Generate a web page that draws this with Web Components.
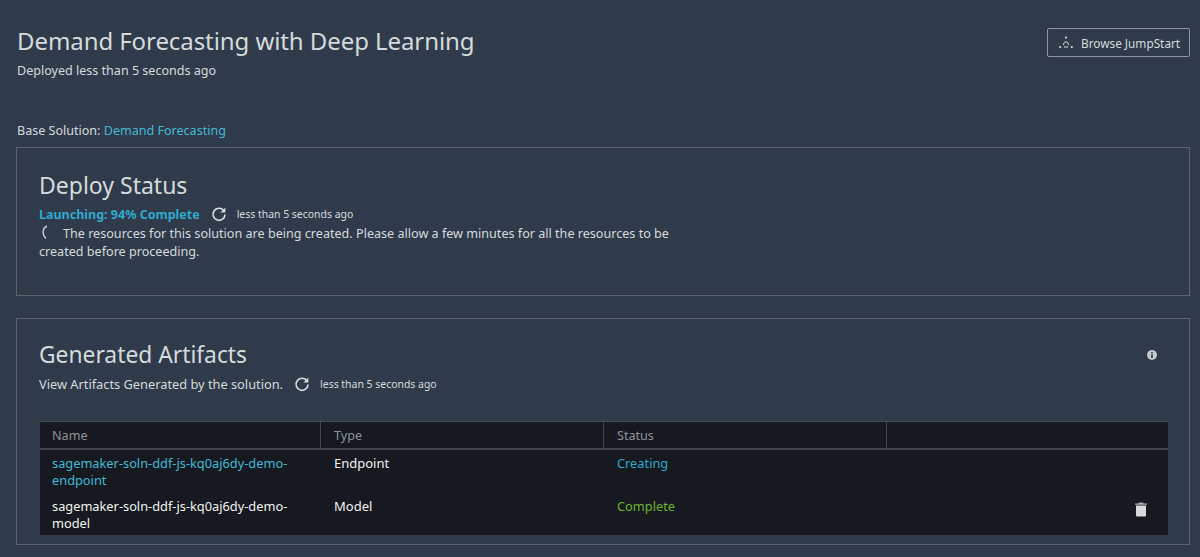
<!DOCTYPE html>
<html>
<head>
<meta charset="utf-8">
<title>Demand Forecasting with Deep Learning</title>
<style>
html, body { margin: 0; height: 100%; background: #2f3a4b; overflow: hidden; }
body { font-family: "Noto Sans", "Liberation Sans", sans-serif; font-size: 13px; color: #d5dbdb; }
</style>
</head>
<body>
<solution-page>
  <page-header slot="header" heading="Demand Forecasting with Deep Learning" sub="Deployed less than 5 seconds ago"></page-header>
  <base-solution slot="base" name="Demand Forecasting"></base-solution>
  <deploy-status slot="deploy"></deploy-status>
  <generated-artifacts slot="artifacts"></generated-artifacts>
</solution-page>

<script>
const REFRESH = `<svg width="16" height="16" viewBox="0 0 16 16" fill="none" stroke="#d5dbdb" stroke-width="1.7">
  <path d="M12.6 4.4A6 6 0 1 0 14 8.4"/><path d="M14.4 1.4v5h-5z" fill="#d5dbdb" stroke="none"/></svg>`;

class SolutionPage extends HTMLElement {
  constructor() {
    super();
    this.attachShadow({ mode: "open" });
    this.shadowRoot.innerHTML = `
      <style>
        :host { display: flex; flex-direction: column; padding: 0 10px 0 16px; }
        .base { margin-top: 42px; padding-left: 1px; }
        .deploy { margin-top: 7px; }
        .artifacts { margin-top: 22px; }
      </style>
      <slot name="header"></slot>
      <div class="base"><slot name="base"></slot></div>
      <div class="deploy"><slot name="deploy"></slot></div>
      <div class="artifacts"><slot name="artifacts"></slot></div>`;
  }
}
customElements.define("solution-page", SolutionPage);

class PageHeader extends HTMLElement {
  connectedCallback() {
    this.attachShadow({ mode: "open" });
    this.shadowRoot.innerHTML = `
      <style>
        :host { display: flex; justify-content: space-between; align-items: flex-start; padding: 24px 0 0 1px; }
        h1 { margin: 0; font-size: 24px; line-height: 34px; font-weight: 400; letter-spacing: -.08px; color: #d5dbdb; }
        p { margin: 4px 0 0; font-size: 12.55px; line-height: 18px; color: #d5dbdb; }
        button { display: flex; align-items: center; gap: 8px; box-sizing: border-box; width: 143px; height: 29px; margin-top: 4px; padding: 0 0 0 11px;
          background: transparent; border: 1px solid #8d96a3; border-radius: 2px; color: #d5dbdb; font: inherit; font-size: 11.8px; }
      </style>
      <div>
        <h1>${this.getAttribute("heading")}</h1>
        <p>${this.getAttribute("sub")}</p>
      </div>
      <button>
        <svg width="14" height="13" viewBox="0 0 14 13" fill="#d5dbdb">
          <circle cx="7" cy="1.5" r="1.1"/><circle cx="1.2" cy="11" r="1.1"/><circle cx="12.8" cy="11" r="1.1"/>
          <path d="M4.8 9.2a2.4 2.4 0 1 1 4.4 0" fill="none" stroke="#d5dbdb" stroke-width="1"/>
          <path d="M5 11h4" stroke="#d5dbdb" stroke-width="1"/>
        </svg>
        Browse JumpStart
      </button>`;
  }
}
customElements.define("page-header", PageHeader);

class BaseSolution extends HTMLElement {
  connectedCallback() {
    this.attachShadow({ mode: "open" });
    this.shadowRoot.innerHTML = `
      <style>
        :host { display: block; font-size: 12.55px; line-height: 18px; color: #d5dbdb; }
        a { color: #44b9d6; text-decoration: none; }
      </style>
      Base Solution: <a href="#">${this.getAttribute("name")}</a>`;
  }
}
customElements.define("base-solution", BaseSolution);

class RefreshStamp extends HTMLElement {
  constructor() {
    super();
    this.attachShadow({ mode: "open" });
    this.shadowRoot.innerHTML = `
      <style>
        :host { display: inline-flex; align-items: center; gap: 10px; font-size: 10.45px; color: #d5dbdb; }
        svg { display: block; }
      </style>
      ${REFRESH}<span>less than 5 seconds ago</span>`;
  }
}
customElements.define("refresh-stamp", RefreshStamp);

class ContentPanel extends HTMLElement {
  constructor() {
    super();
    this.attachShadow({ mode: "open" });
    this.shadowRoot.innerHTML = `
      <style>
        :host { display: block; box-sizing: border-box; border: 1px solid #5f646b; padding: 21px 22px; }
        h2 { margin: var(--heading-shift, 0px) 0 0; font-size: var(--heading-size, 23px); line-height: 32px; font-weight: 400; color: #d5dbdb; }
      </style>
      <h2><slot name="heading"></slot></h2>
      <slot></slot>`;
  }
}
customElements.define("content-panel", ContentPanel);

class DeployStatus extends HTMLElement {
  connectedCallback() {
    this.attachShadow({ mode: "open" });
    this.shadowRoot.innerHTML = `
      <style>
        :host { display: block; }
        content-panel { height: 149px; }
        .line { display: flex; align-items: center; gap: 11px; height: 20px; margin-top: 3px; }
        .state { color: #2fa9ce; font-weight: 700; font-size: 12.5px; }
        .msg { width: 640px; margin: 1px 0 0; font-size: 12.6px; line-height: 18px; color: #d5dbdb; }
        .spin { display: inline-block; vertical-align: -2px; margin-right: 13px; }
      </style>
      <content-panel>
        <span slot="heading">Deploy Status</span>
        <div class="line"><span class="state">Launching: 94% Complete</span><refresh-stamp></refresh-stamp></div>
        <p class="msg"><svg class="spin" width="11" height="15" viewBox="0 0 11 15" fill="none" stroke="#c3c9cf" stroke-width="1.4"><path d="M8 1C3.5 3 2.5 9 7 13.5"/></svg>The resources for this solution are being created. Please allow a few minutes for all the resources to be created before proceeding.</p>
      </content-panel>`;
  }
}
customElements.define("deploy-status", DeployStatus);

class ArtifactRow extends HTMLElement {
  connectedCallback() {
    const link = this.hasAttribute("link");
    const done = this.getAttribute("status") === "Complete";
    this.attachShadow({ mode: "open" });
    this.shadowRoot.innerHTML = `
      <style>
        :host { display: grid; grid-template-columns: 281px 283px 283px 1fr; background: #16191f; font-size: 12.8px; line-height: 17px; color: #fff; }
        :host(:last-child) div { padding-bottom: 3px; }
        div { padding: 5px 12px 4px 12px; }
        .name { width: 256px; padding-right: 0; color: ${link ? "#44b9d6" : "#f2f3f3"}; }
        .type { padding-left: 13px; color: #f2f3f3; font-size: 13px; }
        .status { padding-left: 13px; color: ${done ? "#6fb52e" : "#2fa9ce"}; }
        .act { display: flex; justify-content: flex-end; padding: 9px 21px 0 0; }
      </style>
      <div class="name">${this.getAttribute("name")}</div>
      <div class="type">${this.getAttribute("type")}</div>
      <div class="status">${this.getAttribute("status")}</div>
      <div class="act">${this.hasAttribute("removable") ? `
        <svg width="12" height="15" viewBox="0 0 12 15" fill="#d5dbdb">
          <path d="M4 .4h4l.6 1.2H12v1.2H0V1.6h3.4z" fill="#aab2b8"/><path d="M1 3.6h10v10.2l-.8.8H1.8l-.8-.8z"/>
        </svg>` : ""}</div>`;
  }
}
customElements.define("artifact-row", ArtifactRow);

class GeneratedArtifacts extends HTMLElement {
  connectedCallback() {
    this.attachShadow({ mode: "open" });
    this.shadowRoot.innerHTML = `
      <style>
        :host { display: block; position: relative; }
        content-panel { height: 227px; --heading-shift: -1px; --heading-size: 22.8px; }
        .desc { display: flex; align-items: center; gap: 11px; height: 20px; margin-top: 3px; font-size: 12.8px; color: #d5dbdb; }
        .info { position: absolute; top: 32px; right: 33px; }
        .table { margin: 27px -1px 0 1px; border-top: 1px solid #4a4f56; }
        .head { display: grid; grid-template-columns: 281px 283px 283px 1fr; height: 26px; background: #16191f; border-bottom: 2px solid #414750; }
        .head span { display: flex; align-items: center; padding-left: 12px; font-size: 12.6px; color: #8d9499; border-right: 1px solid #414750; }
        .head span:last-child { border-right: 0; }
        .head span + span { padding-left: 13px; }
      </style>
      <content-panel>
        <span slot="heading">Generated Artifacts</span>
        <svg class="info" width="10" height="10" viewBox="0 0 10 10"><circle cx="5" cy="5" r="5" fill="#c3c9cf"/><rect x="4.2" y="4.2" width="1.6" height="3.8" fill="#2f3a4b"/><rect x="4.2" y="1.9" width="1.6" height="1.5" fill="#2f3a4b"/></svg>
        <div class="desc"><span>View Artifacts Generated by the solution.</span><refresh-stamp></refresh-stamp></div>
        <div class="table">
          <div class="head"><span>Name</span><span>Type</span><span>Status</span><span></span></div>
          <artifact-row link name="sagemaker-soln-ddf-js-kq0aj6dy-demo-endpoint" type="Endpoint" status="Creating"></artifact-row>
          <artifact-row removable name="sagemaker-soln-ddf-js-kq0aj6dy-demo-model" type="Model" status="Complete"></artifact-row>
        </div>
      </content-panel>`;
  }
}
customElements.define("generated-artifacts", GeneratedArtifacts);
</script>
</body>
</html>
